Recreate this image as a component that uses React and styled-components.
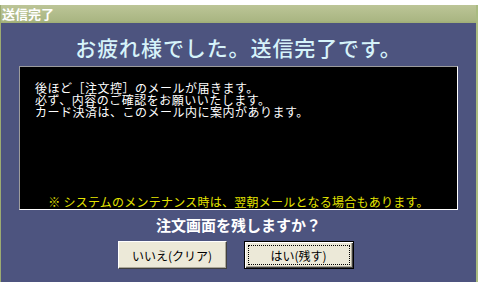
import React from 'react';
import styled, { createGlobalStyle } from 'styled-components';

const GlobalStyle = createGlobalStyle`
    html, body {
        margin: 0;
        padding: 0;
        background: #ffffff;
    }
    body {
        font-family: "Noto Sans CJK JP", "Noto Sans", sans-serif;
    }
`;

const Window = styled.div`
    margin-top: 5px;
    width: 478px;
    height: 277px;
    display: flex;
    flex-direction: column;
    box-sizing: border-box;
    border-left: 1px solid #9cab72;
    border-right: 2px solid #a9bb80;
`;

const TitleBar = styled.div`
    height: 18px;
    flex: none;
    background: linear-gradient(#bcc597, #aab683 85%, #9fae75);
    color: #ffffff;
    font-size: 13px;
    font-weight: bold;
    line-height: 17px;
    padding-left: 1px;
`;

const Body = styled.div`
    flex: 1;
    background: #4d547f;
    display: flex;
    flex-direction: column;
    align-items: center;
`;

const Heading = styled.div`
    margin-top: 12px;
    height: 24px;
    color: #d6f3fa;
    font-size: 21px;
    font-weight: 500;
    line-height: 24px;
    letter-spacing: 0.9px;
`;

const MessageBox = styled.div`
    margin-top: 7px;
    width: 439px;
    height: 144px;
    box-sizing: border-box;
    background: #000000;
    border-style: solid;
    border-width: 1px;
    border-color: #9c9c9c #ffffff #ffffff #9c9c9c;
    display: flex;
    flex-direction: column;
    padding: 15px 0 1px 15px;
`;

const Line = styled.div`
    color: #ffffff;
    font-size: 12px;
    line-height: 12px;
    letter-spacing: 0.5px;
    white-space: nowrap;
`;

const Note = styled.div`
    margin-top: auto;
    margin-left: -15px;
    text-align: center;
    color: #e4e400;
    font-size: 12px;
    line-height: 12px;
    letter-spacing: 0.25px;
    white-space: nowrap;
`;

const Question = styled.div`
    margin-top: 6px;
    color: #ffffff;
    font-size: 15px;
    font-weight: bold;
    line-height: 17px;
`;

const ButtonRow = styled.div`
    margin-top: 8px;
    display: flex;
    gap: 17px;
    padding-right: 6px;
`;

const Button = styled.div`
    width: ${props => props.width}px;
    height: 28px;
    box-sizing: border-box;
    background: #ece9d8;
    color: #000000;
    font-size: 12px;
    display: flex;
    align-items: center;
    justify-content: center;
    position: relative;
    border: 1px solid ${props => (props.primary ? '#000000' : '#ffffff')};
    border-right-color: ${props => (props.primary ? '#000000' : '#404040')};
    border-bottom-color: ${props => (props.primary ? '#000000' : '#404040')};
    box-shadow: ${props => (props.primary
        ? 'inset 1px 1px 0 #ffffff, inset -1px -1px 0 #404040, inset -2px -2px 0 #aca899'
        : 'inset -1px -1px 0 #aca899')};
`;

const FocusRing = styled.div`
    position: absolute;
    inset: 3px;
    border: 1px dotted #000000;
`;

export default function App() {
    return (
        <>
            <GlobalStyle />
            <Window>
                <TitleBar>送信完了</TitleBar>
                <Body>
                    <Heading>お疲れ様でした。送信完了です。</Heading>
                    <MessageBox>
                        <Line>後ほど［注文控］のメールが届きます。</Line>
                        <Line>必ず、内容のご確認をお願いいたします。</Line>
                        <Line>カード決済は、このメール内に案内があります。</Line>
                        <Note>※ システムのメンテナンス時は、翌朝メールとなる場合もあります。</Note>
                    </MessageBox>
                    <Question>注文画面を残しますか？</Question>
                    <ButtonRow>
                        <Button width={109}>いいえ(クリア)</Button>
                        <Button width={110} primary>
                            <FocusRing />
                            はい(残す)
                        </Button>
                    </ButtonRow>
                </Body>
            </Window>
        </>
    );
}
